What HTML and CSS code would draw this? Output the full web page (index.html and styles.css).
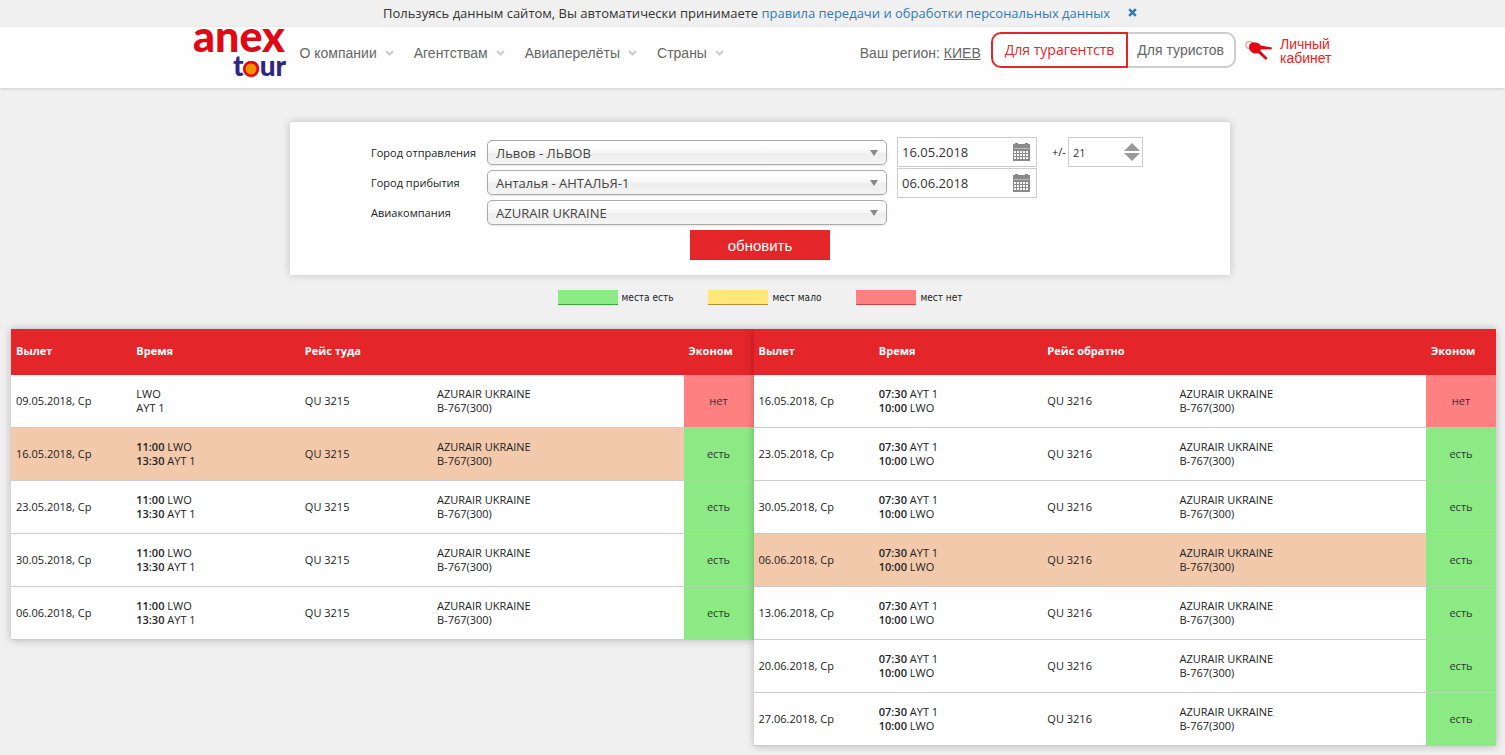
FILE: index.html
```
<!DOCTYPE html>
<html lang="ru">
<head>
  <meta charset="UTF-8">
  <meta name="viewport" content="width=device-width, initial-scale=1.0">
  <title>Anex Tour</title>
  <link rel="stylesheet" href="styles.css">
</head>
<body>
  <div class="notice">
    <span>Пользуясь данным сайтом, Вы автоматически принимаете <a href="#">правила передачи и обработки персональных данных</a></span>
    <button type="button" class="notice-close" aria-label="Закрыть">
      <svg width="9" height="9" viewBox="0 0 9 9"><path d="M1.2 1.2L7.8 7.8M7.8 1.2L1.2 7.8" stroke="#337ab7" stroke-width="2.6"/></svg>
    </button>
  </div>

  <header class="header">
    <div class="header-inner">
      <a href="#" class="logo" aria-label="Anex Tour">
        <svg width="94" height="56" viewBox="0 0 94 56">
          <text class="logo-anex" x="-1" y="25">anex</text>
          <text class="logo-tour" x="39" y="49">t<tspan class="logo-o">o</tspan>ur</text>
          <circle cx="57" cy="42" r="6.8" fill="#f39200" stroke="#e30613" stroke-width="2.6"/>
        </svg>
      </a>
      <nav class="nav">
        <a href="#">О компании <svg class="chevron" viewBox="0 0 9 6"><path d="M1 1L4.500 4.500L8 1"/></svg></a>
        <a href="#">Агентствам <svg class="chevron" viewBox="0 0 9 6"><path d="M1 1L4.500 4.500L8 1"/></svg></a>
        <a href="#">Авиаперелёты <svg class="chevron" viewBox="0 0 9 6"><path d="M1 1L4.500 4.500L8 1"/></svg></a>
        <a href="#">Страны <svg class="chevron" viewBox="0 0 9 6"><path d="M1 1L4.500 4.500L8 1"/></svg></a>
      </nav>
      <div class="region">Ваш регион: <a href="#">КИЕВ</a></div>
      <div class="switch">
        <a href="#" class="switch-item active">Для турагентств</a>
        <a href="#" class="switch-item">Для туристов</a>
      </div>
      <a href="#" class="cabinet">
        <svg width="28" height="22" viewBox="0 0 28 22">
          <circle cx="4.500" cy="5" r="3.600" fill="none" stroke="#e99" stroke-width="1.2"/>
          <path d="M4.500 4.500Q7 1.500 10 2.500Q14 2.500 15.500 5.500L27 7.400L26.500 9.500L23 9.300L16 9.500L15 10.400L22.500 18L21 20L18.500 17.800L13 13Q9 14.500 6.500 12Q3 9 4.500 4.500Z" fill="#e30613"/>
        </svg>
        <span>Личный<br>кабинет</span>
      </a>
    </div>
  </header>

  <main>
    <div class="search">
      <form class="filter">
        <div class="filter-fields">
          <div class="filter-selects">
            <label for="from">Город отправления</label>
            <span class="select"><select id="from"><option>Львов - ЛЬВОВ</option></select></span>
            <label for="to">Город прибытия</label>
            <span class="select"><select id="to"><option>Анталья - АНТАЛЬЯ-1</option></select></span>
            <label for="airline">Авиакомпания</label>
            <span class="select"><select id="airline"><option>AZURAIR UKRAINE</option></select></span>
          </div>
          <div class="filter-dates">
            <div class="date">
              <input type="text" value="16.05.2018" aria-label="Дата вылета">
              <svg class="calendar" viewBox="0 0 17 18"><path d="M0 1H2V0H5V1H12V0H15V1H17V18H0Z" fill="#8a8a8a"/><path d="M1 5.500H16" stroke="#bbb"/><path d="M1 8h2v2h-2zM4 8h2v2h-2zM7 8h2v2h-2zM10 8h2v2h-2zM13 8h2v2h-2zM1 11h2v2h-2zM4 11h2v2h-2zM7 11h2v2h-2zM10 11h2v2h-2zM13 11h2v2h-2zM1 14h2v2h-2zM4 14h2v2h-2zM7 14h2v2h-2zM10 14h2v2h-2zM13 14h2v2h-2z" fill="#fff"/></svg>
            </div>
            <div class="date">
              <input type="text" value="06.06.2018" aria-label="Дата возвращения">
              <svg class="calendar" viewBox="0 0 17 18"><path d="M0 1H2V0H5V1H12V0H15V1H17V18H0Z" fill="#8a8a8a"/><path d="M1 5.500H16" stroke="#bbb"/><path d="M1 8h2v2h-2zM4 8h2v2h-2zM7 8h2v2h-2zM10 8h2v2h-2zM13 8h2v2h-2zM1 11h2v2h-2zM4 11h2v2h-2zM7 11h2v2h-2zM10 11h2v2h-2zM13 11h2v2h-2zM1 14h2v2h-2zM4 14h2v2h-2zM7 14h2v2h-2zM10 14h2v2h-2zM13 14h2v2h-2z" fill="#fff"/></svg>
            </div>
          </div>
          <div class="filter-days">
            <label for="days">+/-</label>
            <div class="spinner">
              <input type="text" id="days" value="21">
              <svg class="arrows" viewBox="0 0 16 18"><path d="M8 0L16 8H0ZM0 10H16L8 18Z" fill="#999"/></svg>
            </div>
          </div>
        </div>
        <button type="submit" class="submit">обновить</button>
      </form>

      <div class="legend">
        <span class="legend-item"><i class="swatch swatch-yes"></i>места есть</span>
        <span class="legend-item"><i class="swatch swatch-few"></i>мест мало</span>
        <span class="legend-item"><i class="swatch swatch-no"></i>мест нет</span>
      </div>
    </div>

    <div class="flights">
      <table>
        <thead>
          <tr><th class="col-date">Вылет</th><th class="col-time">Время</th><th class="col-flight">Рейс туда</th><th></th><th class="col-class">Эконом</th></tr>
        </thead>
        <tbody>
          <tr><td>09.05.2018, Ср</td><td>LWO<br>AYT 1</td><td>QU 3215</td><td>AZURAIR UKRAINE<br>B-767(300)</td><td class="no">нет</td></tr>
          <tr class="selected"><td>16.05.2018, Ср</td><td><b>11:00</b> LWO<br><b>13:30</b> AYT 1</td><td>QU 3215</td><td>AZURAIR UKRAINE<br>B-767(300)</td><td class="yes">есть</td></tr>
          <tr><td>23.05.2018, Ср</td><td><b>11:00</b> LWO<br><b>13:30</b> AYT 1</td><td>QU 3215</td><td>AZURAIR UKRAINE<br>B-767(300)</td><td class="yes">есть</td></tr>
          <tr><td>30.05.2018, Ср</td><td><b>11:00</b> LWO<br><b>13:30</b> AYT 1</td><td>QU 3215</td><td>AZURAIR UKRAINE<br>B-767(300)</td><td class="yes">есть</td></tr>
          <tr><td>06.06.2018, Ср</td><td><b>11:00</b> LWO<br><b>13:30</b> AYT 1</td><td>QU 3215</td><td>AZURAIR UKRAINE<br>B-767(300)</td><td class="yes">есть</td></tr>
        </tbody>
      </table>
      <table>
        <thead>
          <tr><th class="col-date">Вылет</th><th class="col-time">Время</th><th class="col-flight">Рейс обратно</th><th></th><th class="col-class">Эконом</th></tr>
        </thead>
        <tbody>
          <tr><td>16.05.2018, Ср</td><td><b>07:30</b> AYT 1<br><b>10:00</b> LWO</td><td>QU 3216</td><td>AZURAIR UKRAINE<br>B-767(300)</td><td class="no">нет</td></tr>
          <tr><td>23.05.2018, Ср</td><td><b>07:30</b> AYT 1<br><b>10:00</b> LWO</td><td>QU 3216</td><td>AZURAIR UKRAINE<br>B-767(300)</td><td class="yes">есть</td></tr>
          <tr><td>30.05.2018, Ср</td><td><b>07:30</b> AYT 1<br><b>10:00</b> LWO</td><td>QU 3216</td><td>AZURAIR UKRAINE<br>B-767(300)</td><td class="yes">есть</td></tr>
          <tr class="selected"><td>06.06.2018, Ср</td><td><b>07:30</b> AYT 1<br><b>10:00</b> LWO</td><td>QU 3216</td><td>AZURAIR UKRAINE<br>B-767(300)</td><td class="yes">есть</td></tr>
          <tr><td>13.06.2018, Ср</td><td><b>07:30</b> AYT 1<br><b>10:00</b> LWO</td><td>QU 3216</td><td>AZURAIR UKRAINE<br>B-767(300)</td><td class="yes">есть</td></tr>
          <tr><td>20.06.2018, Ср</td><td><b>07:30</b> AYT 1<br><b>10:00</b> LWO</td><td>QU 3216</td><td>AZURAIR UKRAINE<br>B-767(300)</td><td class="yes">есть</td></tr>
          <tr><td>27.06.2018, Ср</td><td><b>07:30</b> AYT 1<br><b>10:00</b> LWO</td><td>QU 3216</td><td>AZURAIR UKRAINE<br>B-767(300)</td><td class="yes">есть</td></tr>
        </tbody>
      </table>
    </div>
  </main>
</body>
</html>
```
FILE: styles.css
```
* {
  box-sizing: border-box;
}
body {
  margin: 0;
  background-color: #f0f0f0;
  font-family: "Open Sans", sans-serif;
  font-size: 11px;
  line-height: 14px;
  color: #222;
}
a {
  text-decoration: none;
}
.notice {
  display: flex;
  justify-content: center;
  align-items: center;
  gap: 18px;
  height: 27px;
  padding: 0 0 2px 15px;
  font-size: 13px;
  color: #333;
}
.notice a {
  color: #337ab7;
}
.notice-close {
  display: flex;
  padding: 0;
  border: none;
  background: none;
  cursor: pointer;
}
.header {
  background-color: #fefefe;
  box-shadow: 0 1px 3px rgba(0, 0, 0, 0.15);
}
.header-inner {
  display: flex;
  align-items: center;
  height: 61px;
  max-width: 1158px;
  margin: 0 auto;
  padding-left: 20px;
  font-family: "Liberation Sans", Arial, sans-serif;
  font-size: 14px;
  color: #666;
}
.header a {
  color: #666;
}
.logo {
  width: 94px;
  height: 61px;
}
.logo svg {
  overflow: visible;
}
.logo-anex,
.logo-tour {
  font-family: Lato, sans-serif;
  font-weight: 900;
  font-size: 43px;
  fill: #e30613;
}
.logo-tour {
  font-size: 28px;
  fill: #312783;
}
.logo-o {
  fill: #e30613;
}
.nav {
  display: flex;
  gap: 20px;
  margin-left: 12px;
  padding-bottom: 10px;
}
.nav a {
  display: flex;
  align-items: center;
  gap: 8px;
}
.chevron {
  width: 9px;
  height: 6px;
  fill: none;
  stroke: #ccc;
  stroke-width: 2;
}
.region {
  margin-left: auto;
  padding-bottom: 10px;
}
.region a {
  text-decoration: underline;
}
.switch {
  display: flex;
  margin-left: 10px;
  margin-bottom: 15px;
}
.switch-item {
  height: 36px;
  padding: 0 10px 0 9px;
  border: 2px solid #ccc;
  border-left: none;
  border-radius: 0 10px 10px 0;
  line-height: 32px;
}
.switch-item.active {
  padding: 0 12px;
  border: 2px solid #e42529;
  border-radius: 10px 0 0 10px;
  font-family: "Open Sans", sans-serif;
  color: #e42529;
}
.cabinet {
  display: flex;
  align-items: center;
  gap: 7px;
  margin-left: 9px;
  padding-bottom: 14px;
}
.header .cabinet {
  color: #e42529;
}
main {
  padding: 34px 9px 10px 11px;
}
.search {
  padding-left: 13px;
}
.filter {
  width: 940px;
  max-width: 100%;
  margin: 0 auto;
  padding: 15px 0;
  background-color: #fefefe;
  box-shadow: 0 0 8px rgba(0, 0, 0, 0.2);
}
.filter-fields {
  display: flex;
  padding-left: 81px;
}
.filter-selects {
  display: grid;
  grid-template-columns: 116px 400px;
  row-gap: 5px;
  align-items: center;
  padding-top: 3px;
}
.select {
  position: relative;
}
.select::after {
  content: "";
  position: absolute;
  top: 10px;
  right: 9px;
  border: 4px solid transparent;
  border-top: 6px solid #888;
  border-bottom: none;
  pointer-events: none;
}
.select select {
  display: block;
  appearance: none;
  width: 100%;
  height: 25px;
  padding: 0 8px;
  border: 1px solid #aaa;
  border-radius: 5px;
  background: linear-gradient(#fff 20%, #f6f6f6 50%, #eee 52%, #f4f4f4 100%);
  box-shadow: 0 1px 2px rgba(0, 0, 0, 0.1);
  font: 13px "Open Sans", sans-serif;
  color: #444;
}
.filter-dates {
  display: flex;
  flex-direction: column;
  gap: 1px;
  margin-left: 10px;
}
.date,
.spinner {
  display: flex;
  align-items: center;
  height: 30px;
  padding: 0 6px 0 4px;
  border: 1px solid #ccc;
  background-color: #fff;
}
.date {
  width: 140px;
}
.date input,
.spinner input {
  flex: 1;
  min-width: 0;
  padding: 0;
  border: none;
  outline: none;
  background: none;
  font: 13px "Open Sans", sans-serif;
  color: #333;
}
.calendar {
  width: 17px;
  height: 18px;
}
.filter-days {
  display: flex;
  align-items: center;
  align-self: flex-start;
  gap: 2px;
  margin-left: 15px;
}
.spinner {
  width: 75px;
  padding: 0 2px 0 4px;
}
.spinner input {
  font-size: 11px;
}
.arrows {
  width: 16px;
  height: 18px;
}
.submit {
  display: block;
  width: 140px;
  height: 30px;
  margin: 5px auto 0;
  border: none;
  background-color: #e42529;
  font: 15px "Liberation Sans", Arial, sans-serif;
  color: #fff;
  cursor: pointer;
}
.legend {
  display: flex;
  justify-content: center;
  gap: 35px;
  margin: 15px 0 24px;
  font-family: "DejaVu Sans Condensed", "DejaVu Sans", sans-serif;
  font-size: 10px;
}
.legend-item {
  display: flex;
  align-items: center;
  gap: 4px;
}
.swatch {
  width: 60px;
  height: 15px;
  border-bottom: 1px solid #3a3;
  background-color: #8cea85;
}
.swatch-few {
  border-color: #b09030;
  background-color: #ffe777;
}
.swatch-no {
  border-color: #c44;
  background-color: #ff8080;
}
.flights {
  display: flex;
  align-items: flex-start;
}
.flights table {
  flex: 1;
  width: 50%;
  table-layout: fixed;
  border-spacing: 0;
  background-color: #fefefe;
  box-shadow: 0 0 8px rgba(0, 0, 0, 0.25);
}
.flights th {
  height: 46px;
  padding: 0 5px 2px;
  background-color: #e42529;
  text-align: left;
  font-weight: 700;
  color: #fff;
}
.flights td {
  height: 53px;
  padding: 0 5px;
  border-bottom: 1px solid #ccc;
}
.flights b {
  font-weight: 600;
}
.flights .selected {
  background-color: #f3c9ab;
}
.flights .yes,
.flights .no {
  border-bottom-color: #a5dca0;
  background-color: #8cea85;
  text-align: center;
  color: #333;
}
.flights .no {
  background-color: #ff8080;
}
.col-date {
  width: 16.2%;
}
.col-time {
  width: 22.7%;
}
.col-flight {
  width: 17.8%;
}
.col-class {
  width: 70px;
}
```
